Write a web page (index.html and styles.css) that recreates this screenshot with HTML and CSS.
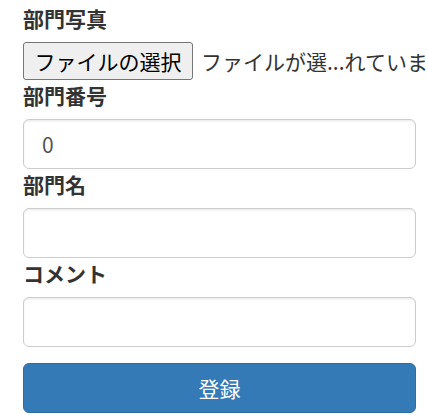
FILE: index.html
```html
<!DOCTYPE html>
<html lang="ja">
<head>
<meta charset="utf-8">
<link rel="stylesheet" href="styles.css">
</head>
<body>
<form class="form">
  <label class="label">部門写真</label>
  <div class="file-row">
    <button type="button" class="file-btn">ファイルの選択</button>
    <span class="file-name">ファイルが選...れていま</span>
  </div>
  <label class="label">部門番号</label>
  <input class="control" type="text" value="0">
  <label class="label">部門名</label>
  <input class="control" type="text">
  <label class="label">コメント</label>
  <input class="control" type="text">
  <button type="button" class="submit">登録</button>
</form>
</body>
</html>
```
FILE: styles.css
```css
html, body {
  margin: 0;
  padding: 0;
  background: #fff;
}
body {
  font-family: "Noto Sans CJK JP", "Noto Sans", sans-serif;
  font-size: 21px;
  color: #333;
  overflow: hidden;
}
.form {
  display: flex;
  flex-direction: column;
  padding: 3px 12px 0 23px;
}
.label {
  display: block;
  font-weight: bold;
  font-size: 21px;
  line-height: 30px;
  height: 30px;
  margin-bottom: 9px;
  color: #333;
}
.file-row {
  display: flex;
  align-items: center;
  height: 38px;
  white-space: nowrap;
}
.file-btn {
  flex: none;
  box-sizing: border-box;
  height: 38px;
  width: 170px;
  padding: 0;
  margin: 0 8px 0 0;
  background: #efefef;
  border: 1px solid #767676;
  border-radius: 3px;
  font-family: inherit;
  font-size: 21px;
  line-height: 36px;
  color: #000;
}
.file-name {
  font-size: 21px;
  line-height: 36px;
  color: #333;
}
.control {
  box-sizing: border-box;
  width: 393px;
  height: 50px;
  margin: 0;
  padding: 9px 18px;
  border: 1px solid #ccc;
  border-radius: 6px;
  box-shadow: inset 0 1.5px 1.5px rgba(0,0,0,.075);
  font-family: inherit;
  font-size: 21px;
  color: #555;
  background: #fff;
  outline: none;
}
.submit {
  box-sizing: border-box;
  width: 393px;
  height: 50px;
  margin: 16px 0 0 0;
  padding: 0;
  border: 1px solid #2e6da4;
  border-radius: 6px;
  background: #337ab7;
  color: #fff;
  font-family: inherit;
  font-size: 21px;
}
```
